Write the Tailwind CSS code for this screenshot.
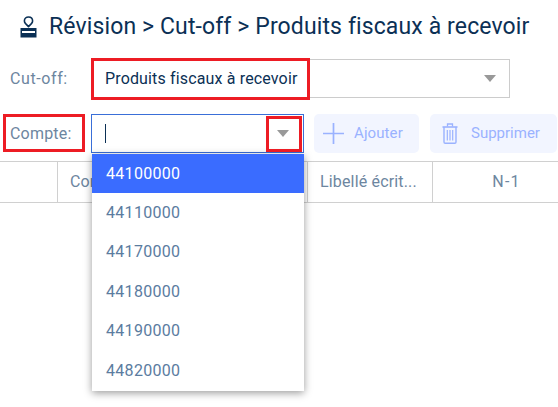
<!DOCTYPE html>
<html><head><meta charset="utf-8"><script src="https://cdn.jsdelivr.net/npm/@tailwindcss/browser@4"></script></head>
<body class="bg-white">
<div class="relative w-[558px] h-[407px] overflow-hidden font-['Roboto',sans-serif] bg-white">
  <div class="flex items-center h-[54px] pl-[20px] gap-[12px] text-[#0b3055]">
    <svg class="w-[17px] h-[22px]" viewBox="0 0 17 22"><path d="M8.5 10.6 L5.6 7.6 C4.5 6.4 4.4 5.6 4.4 4.9 C4.4 2.6 6.2 1 8.5 1 C10.8 1 12.6 2.6 12.6 4.9 C12.6 5.6 12.5 6.4 11.4 7.6 Z" fill="none" stroke="#0b3055" stroke-width="1.6" stroke-linejoin="round"/><rect x="0.5" y="12" width="16" height="9.5" fill="#0b3055"/><rect x="2" y="15" width="13" height="2" fill="#ffffff"/></svg>
    <h1 class="text-[23px] leading-[28px] tracking-[0.12px] whitespace-nowrap">Révision &gt; Cut-off &gt; Produits fiscaux à recevoir</h1>
  </div>
  <div class="flex items-center h-[39px] mt-[5px]">
    <span class="w-[92px] pl-[10px] text-[16px] tracking-[0.6px] text-[#6d86a0]">Cut-off:</span>
    <div class="w-[418px] h-[39px] border border-[#cccccc] flex items-center justify-between pl-[12px] pr-[13px]">
      <span class="text-[16px] tracking-[0.15px] text-[#0b3055]">Produits fiscaux à recevoir</span>
      <span class="w-0 h-0 border-x-[6.5px] border-x-transparent border-t-[7px] border-t-[#999999]"></span>
    </div>
  </div>
  <div class="flex items-center h-[39px] mt-[16px]">
    <span class="w-[91px] pl-[10px] text-[16px] tracking-[0.2px] text-[#6d86a0]">Compte:</span>
    <div class="w-[213px] h-[39px] border border-[#3a6fd8] flex items-center justify-between pl-[13px] pr-[14px]">
      <span class="w-px h-[19px] bg-[#0b3055]"></span>
      <span class="w-0 h-0 border-x-[6.5px] border-x-transparent border-t-[7px] border-t-[#999999]"></span>
    </div>
    <div class="ml-[10px] w-[105px] h-[39px] rounded-[5px] bg-[#f2f5ff] flex items-center pl-[9px] gap-[10px] text-[15px] tracking-[0.1px] text-[#9ab2ff]">
      <svg class="w-[21px] h-[21px]" viewBox="0 0 21 21"><path d="M10.5 0V21M0 10.5H21" stroke="#9ab2ff" stroke-width="1.7" fill="none"/></svg>
      <span>Ajouter</span>
    </div>
    <div class="ml-[11px] w-[127px] h-[39px] rounded-[5px] bg-[#f2f5ff] flex items-center pl-[12px] gap-[13px] text-[15px] tracking-[0px] text-[#9ab2ff]">
      <svg class="w-[16px] h-[21px]" viewBox="0 0 16 21" fill="none" stroke="#9ab2ff"><path d="M0.5 4H15.5" stroke-width="1.6"/><path d="M5.5 3.5V1H10.5V3.5" stroke-width="1.3"/><path d="M2 4V19C2 19.8 2.6 20.3 3.2 20.3H12.8C13.4 20.3 14 19.8 14 19V4" stroke-width="1.4"/><path d="M5.3 7V17.5M8 7V17.5M10.7 7V17.5" stroke-width="1.2"/></svg>
      <span>Supprimer</span>
    </div>
  </div>
  <div class="flex h-[42px] mt-[8px] border-y border-[#d0d0d0] text-[16px] tracking-[0.16px] text-[#6d86a0]">
    <div class="w-[58px] border-r border-[#d0d0d0]"></div>
    <div class="w-[250px] border-r border-[#d0d0d0] flex items-center pl-[12px]">Compte</div>
    <div class="w-[125px] border-r border-[#d0d0d0] flex items-center pl-[12px] whitespace-nowrap">Libellé écrit...</div>
    <div class="flex-1 flex items-center justify-center pl-[22px] tracking-[1.2px]">N-1</div>
  </div>
  <div class="absolute left-[92px] top-[154px] w-[212px] h-[237px] bg-white shadow-[0_2px_8px_rgba(0,0,0,0.4)] text-[16px] tracking-[0.3px] text-[#5b7c9f]">
    <div class="h-[39px] flex items-center pl-[14px] bg-[#3a6cff] text-white">44100000</div>
    <div class="h-[39.5px] flex items-center pl-[14px]">44110000</div>
    <div class="h-[39.5px] flex items-center pl-[14px]">44170000</div>
    <div class="h-[39.5px] flex items-center pl-[14px]">44180000</div>
    <div class="h-[39.5px] flex items-center pl-[14px]">44190000</div>
    <div class="h-[39.5px] flex items-center pl-[14px]">44820000</div>
  </div>
  <div class="absolute left-[91px] top-[58px] w-[219px] h-[42px] border-[3px] border-[#ed1c24]"></div>
  <div class="absolute left-[3px] top-[114px] w-[82px] h-[38px] border-[3px] border-[#ed1c24]"></div>
  <div class="absolute left-[266px] top-[116px] w-[36px] h-[36px] border-[3px] border-[#ed1c24]"></div>
</div>
</body></html>
